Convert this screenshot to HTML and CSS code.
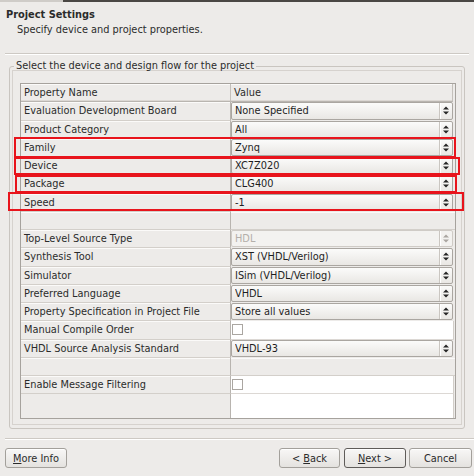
FILE: index.html
```html
<!DOCTYPE html>
<html>
<head>
<meta charset="utf-8">
<link rel="stylesheet" href="styles.css">
</head>
<body>
<div class="strip"><div class="strip-tab"></div><div class="strip-bar"></div></div>
<div class="head">
  <div class="title">Project Settings</div>
  <div class="subtitle">Specify device and project properties.</div>
</div>
<div class="sep sep-top"></div>
<fieldset class="group">
  <legend>Select the device and design flow for the project</legend>
  <div class="frame">
    <div class="table">
      <div class="hcell hname">Property Name</div><div class="hcell hval">Value</div>

      <div class="lbl">Evaluation Development Board</div>
      <div class="val"><div class="combo"><span class="ctext">None Specified</span><span class="cbtn"><svg class="arr" width="6" height="9" viewBox="0 0 6 9"><path d="M0 3.5 L3 0.5 L6 3.5Z M0 5.5 L3 8.5 L6 5.5Z"/></svg></span></div></div>

      <div class="lbl">Product Category</div>
      <div class="val"><div class="combo"><span class="ctext">All</span><span class="cbtn"><svg class="arr" width="6" height="9" viewBox="0 0 6 9"><path d="M0 3.5 L3 0.5 L6 3.5Z M0 5.5 L3 8.5 L6 5.5Z"/></svg></span></div></div>

      <div class="lbl">Family</div>
      <div class="val"><div class="combo"><span class="ctext">Zynq</span><span class="cbtn"><svg class="arr" width="6" height="9" viewBox="0 0 6 9"><path d="M0 3.5 L3 0.5 L6 3.5Z M0 5.5 L3 8.5 L6 5.5Z"/></svg></span></div></div>

      <div class="lbl">Device</div>
      <div class="val"><div class="combo"><span class="ctext">XC7Z020</span><span class="cbtn"><svg class="arr" width="6" height="9" viewBox="0 0 6 9"><path d="M0 3.5 L3 0.5 L6 3.5Z M0 5.5 L3 8.5 L6 5.5Z"/></svg></span></div></div>

      <div class="lbl">Package</div>
      <div class="val"><div class="combo"><span class="ctext">CLG400</span><span class="cbtn"><svg class="arr" width="6" height="9" viewBox="0 0 6 9"><path d="M0 3.5 L3 0.5 L6 3.5Z M0 5.5 L3 8.5 L6 5.5Z"/></svg></span></div></div>

      <div class="lbl">Speed</div>
      <div class="val"><div class="combo"><span class="ctext">-1</span><span class="cbtn"><svg class="arr" width="6" height="9" viewBox="0 0 6 9"><path d="M0 3.5 L3 0.5 L6 3.5Z M0 5.5 L3 8.5 L6 5.5Z"/></svg></span></div></div>

      <div class="lbl"></div>
      <div class="val empty"></div>

      <div class="lbl">Top-Level Source Type</div>
      <div class="val"><div class="combo disabled"><span class="ctext">HDL</span><span class="cbtn"><svg class="arr" width="6" height="9" viewBox="0 0 6 9"><path d="M0 3.5 L3 0.5 L6 3.5Z M0 5.5 L3 8.5 L6 5.5Z"/></svg></span></div></div>

      <div class="lbl">Synthesis Tool</div>
      <div class="val"><div class="combo"><span class="ctext">XST (VHDL/Verilog)</span><span class="cbtn"><svg class="arr" width="6" height="9" viewBox="0 0 6 9"><path d="M0 3.5 L3 0.5 L6 3.5Z M0 5.5 L3 8.5 L6 5.5Z"/></svg></span></div></div>

      <div class="lbl">Simulator</div>
      <div class="val"><div class="combo"><span class="ctext">ISim (VHDL/Verilog)</span><span class="cbtn"><svg class="arr" width="6" height="9" viewBox="0 0 6 9"><path d="M0 3.5 L3 0.5 L6 3.5Z M0 5.5 L3 8.5 L6 5.5Z"/></svg></span></div></div>

      <div class="lbl">Preferred Language</div>
      <div class="val"><div class="combo"><span class="ctext">VHDL</span><span class="cbtn"><svg class="arr" width="6" height="9" viewBox="0 0 6 9"><path d="M0 3.5 L3 0.5 L6 3.5Z M0 5.5 L3 8.5 L6 5.5Z"/></svg></span></div></div>

      <div class="lbl">Property Specification in Project File</div>
      <div class="val"><div class="combo"><span class="ctext">Store all values</span><span class="cbtn"><svg class="arr" width="6" height="9" viewBox="0 0 6 9"><path d="M0 3.5 L3 0.5 L6 3.5Z M0 5.5 L3 8.5 L6 5.5Z"/></svg></span></div></div>

      <div class="lbl">Manual Compile Order</div>
      <div class="val white"><span class="chk"></span></div>

      <div class="lbl">VHDL Source Analysis Standard</div>
      <div class="val"><div class="combo"><span class="ctext">VHDL-93</span><span class="cbtn"><svg class="arr" width="6" height="9" viewBox="0 0 6 9"><path d="M0 3.5 L3 0.5 L6 3.5Z M0 5.5 L3 8.5 L6 5.5Z"/></svg></span></div></div>

      <div class="lbl"></div>
      <div class="val empty"></div>

      <div class="lbl">Enable Message Filtering</div>
      <div class="val white"><span class="chk"></span></div>

      <div class="lbl filler"></div>
      <div class="val white filler"></div>

      <div class="mark mark-family"></div>
      <div class="mark mark-device"></div>
      <div class="mark mark-package"></div>
      <div class="mark mark-speed"></div>
    </div>
  </div>
</fieldset>
<div class="sep sep-bottom"></div>
<div class="buttons">
  <button class="btn btn-more"><span><u>M</u>ore Info</span></button>
  <div class="btn-group">
    <button class="btn btn-back"><span>&lt; <u>B</u>ack</span></button>
    <button class="btn btn-next"><span><u>N</u>ext &gt;</span></button>
    <button class="btn btn-cancel"><span>Cancel</span></button>
  </div>
</div>
</body>
</html>
```

FILE: styles.css
```css
html, body {
  margin: 0;
  padding: 0;
}
body {
  width: 474px;
  height: 476px;
  overflow: hidden;
  background: #edebe9;
  font-family: "DejaVu Sans", sans-serif;
  font-size: 9.8px;
  color: #2b2b2b;
}

.strip {
  display: flex;
  height: 2px;
}
.strip-tab {
  width: 63px;
  background: #cfccc8;
}
.strip-bar {
  flex: 1;
  background: #4a4744;
}

.head {
  padding: 7px 0 0 6px;
  line-height: 12px;
}
.title {
  font-weight: bold;
}
.subtitle {
  margin: 3px 0 0 11px;
}

.sep {
  height: 0;
  border-top: 1px solid #cdc9c4;
  border-bottom: 1px solid #ffffff;
}
.sep-top {
  margin: 17px 5px 0 5px;
}
.sep-bottom {
  margin: 9px 0 0 5px;
}

.group {
  margin: 5px 0 0 9px;
  width: 456px;
  min-width: 0;
  box-sizing: border-box;
  border: 1px solid #c9c5c0;
  border-radius: 3px;
  padding: 0 2px 3px 2px;
}
.group legend {
  padding: 0 2px;
  margin-left: 2px;
  line-height: 12px;
}

.frame {
  border: 1px solid #d6d2ce;
  padding: 12px 5px 5px 7px;
  margin-top: -2px;
}

.table {
  position: relative;
  display: grid;
  grid-template-columns: 210px 224px;
  grid-template-rows: repeat(17, 18.25px) 1fr;
  height: 336px;
  box-sizing: border-box;
  border: 1px solid #a6a29d;
  background: #edebe9;
}

.hcell {
  display: flex;
  align-items: center;
  padding-left: 3px;
  border-bottom: 1px solid #b9b5b0;
  box-shadow: inset 0 1px 0 #fbfaf9, inset 0 -1px 0 #dcd8d4;
  white-space: nowrap;
}
.hname {
  border-right: 1px solid #c4c0bb;
}
.hval {
  margin-right: 2px;
  border-right: 1px solid #c4c0bb;
}

.lbl {
  display: flex;
  align-items: center;
  padding-left: 3px;
  border-right: 1px solid #b8b4af;
  border-bottom: 1px solid #d3cfca;
  box-shadow: inset 0 1px 0 #fbfaf9;
  white-space: nowrap;
  overflow: hidden;
}
.lbl.filler {
  border-bottom: none;
  box-shadow: none;
}

.val {
  display: flex;
  padding: 0 2px 1px 0;
  min-width: 0;
}
.val.empty {
  border-bottom: 1px solid #d3cfca;
  box-shadow: inset 0 1px 0 #fbfaf9;
}
.val.white {
  background: #ffffff;
  padding: 0;
  margin-right: 1px;
  border-right: 1px solid #d2cec9;
  border-bottom: 1px solid #dcd8d4;
  align-items: center;
}
.val.filler {
  border-bottom: none;
}

.combo {
  flex: 1;
  display: flex;
  align-items: center;
  min-width: 0;
  border: 1px solid #aaa6a1;
  border-radius: 2px;
  background: linear-gradient(#fbfbfa, #e9e7e4);
  padding-left: 3px;
  color: #1e1e1e;
}
.ctext {
  flex: 1;
  white-space: nowrap;
  overflow: hidden;
}
.cbtn {
  width: 12px;
  align-self: stretch;
  display: flex;
  align-items: center;
  justify-content: center;
  border-left: 1px solid #cac6c1;
  box-shadow: inset 1px 0 0 #ffffff;
}
.arr {
  display: block;
  fill: #262626;
}
.combo.disabled {
  color: #b3afaa;
  border-color: #cfcbc6;
  background: #f3f2f0;
}
.combo.disabled .arr {
  fill: #aaa6a1;
}

.chk {
  width: 9px;
  height: 9px;
  margin-left: 1px;
  border: 1px solid #aaa6a1;
  background: #ffffff;
}

.mark {
  position: absolute;
  box-sizing: border-box;
  border: 2px solid #e8141c;
  pointer-events: none;
}
.mark-family {
  left: -7px;
  top: 53px;
  width: 442px;
  height: 21px;
}
.mark-device {
  left: -7px;
  top: 73px;
  width: 446px;
  height: 18px;
}
.mark-package {
  left: -6px;
  top: 91px;
  width: 442px;
  height: 18px;
}
.mark-speed {
  left: -13px;
  top: 108px;
  width: 456px;
  height: 19px;
}

.buttons {
  display: flex;
  margin: 8px 2px 0 5px;
}
.btn-group {
  display: flex;
  margin-left: auto;
}
.btn {
  height: 20px;
  box-sizing: border-box;
  padding: 0;
  border: 1px solid #a3a09b;
  border-radius: 3px;
  background: linear-gradient(#f8f7f6, #e4e2df);
  box-shadow: inset 0 1px 0 #ffffff;
  font: inherit;
  color: #2b2b2b;
  display: flex;
  align-items: center;
  justify-content: center;
}
.btn-more {
  width: 62px;
}
.btn-back {
  width: 61px;
}
.btn-next {
  width: 62px;
  margin-left: 4px;
  border-color: #5f5c59;
}
.btn-cancel {
  width: 63px;
  margin-left: 3px;
}
```
